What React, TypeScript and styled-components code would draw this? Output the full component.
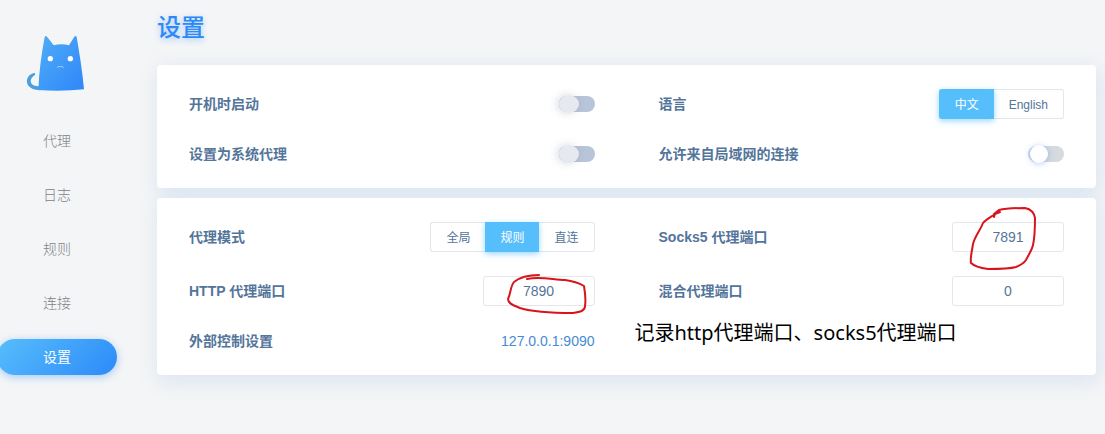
import React, { useState } from "react";
import styled, { createGlobalStyle, css } from "styled-components";

const GlobalStyle = createGlobalStyle`
  * { box-sizing: border-box; }
  body {
    margin: 0;
    background: #f4f5f6;
    font-family: "Liberation Sans", "Noto Sans CJK SC", sans-serif;
    font-size: 14px;
    color: #54759a;
  }
  button, input { font-family: inherit; }
`;

const Page = styled.div`
  display: flex;
  min-height: 100vh;
  overflow: hidden;
`;

const Sidebar = styled.aside`
  flex: none;
  width: 120px;
  margin-left: -3px;
  padding-top: 34px;
  display: flex;
  flex-direction: column;
  align-items: center;
`;

const Nav = styled.nav`
  width: 100%;
  margin-top: 32px;
  display: flex;
  flex-direction: column;
  gap: 18px;
`;

const NavLink = styled.a<{ $active?: boolean }>`
  height: 36px;
  border-radius: 18px;
  line-height: 36px;
  text-align: center;
  text-decoration: none;
  font-weight: 300;
  color: #808388;
  ${(p) =>
    p.$active &&
    css`
      color: #fff;
      font-weight: 400;
      background: linear-gradient(135deg, #57befc, #2c8af8);
      box-shadow: 0 2px 8px rgba(44, 138, 248, 0.4);
    `}
`;

const Main = styled.main`
  flex: 1;
  min-width: 0;
  padding: 10px 9px 40px 40px;
`;

const Title = styled.h1`
  margin: 0 0 19px;
  font-size: 24px;
  line-height: 36px;
  font-weight: 500;
  color: #2c8af8;
  text-shadow: 0 2px 6px rgba(44, 138, 248, 0.4);
`;

const Card = styled.section`
  display: grid;
  grid-template-columns: 1fr 1fr;
  row-gap: 24px;
  padding: 24px 0;
  margin-bottom: 10px;
  border-radius: 4px;
  background: #fff;
  box-shadow: 2px 5px 20px 2px rgba(50, 125, 220, 0.12);
`;

const Row = styled.div`
  position: relative;
  display: flex;
  align-items: center;
  justify-content: space-between;
  min-height: 21px;
  padding: 0 32px;
`;

const Label = styled.label`
  font-weight: 700;
  line-height: 20px;
`;

const Switch = styled.input`
  appearance: none;
  position: relative;
  width: 36px;
  height: 16px;
  margin: 0;
  border-radius: 8px;
  background: #d5dadf;
  cursor: pointer;

  &::before {
    content: "";
    position: absolute;
    top: -1px;
    left: 2px;
    width: 18px;
    height: 18px;
    border-radius: 50%;
    background: #fff;
    box-shadow: 0 1px 6px rgba(44, 110, 240, 0.35);
  }
  &:checked {
    background: #57befc;
  }
  &:checked::before {
    left: 18px;
  }
  &:disabled {
    background: #b8c5d8;
    cursor: default;
  }
  &:disabled::before {
    left: 0;
    width: 20px;
    background: #e6eaf0;
    box-shadow: -2px 0 8px rgba(84, 100, 130, 0.25);
  }
`;

const Segments = styled.div`
  display: flex;
`;

const Segment = styled.button<{ $active: boolean }>`
  height: 30px;
  padding: 1px 15px 0;
  border: 1px solid #e3e7ec;
  border-right-width: 0;
  background: #fff;
  color: #54759a;
  font-size: 12px;
  line-height: 28px;
  cursor: pointer;
  &:first-child { border-radius: 3px 0 0 3px; }
  &:last-child { border-right-width: 1px; border-radius: 0 3px 3px 0; }
  ${(p) =>
    p.$active &&
    css`
      z-index: 1;
      border-color: #57befc;
      background: #57befc;
      color: #fff;
      box-shadow: 0 2px 6px rgba(87, 190, 252, 0.6);
      & + & { border-left-width: 0; }
    `}
`;

const Field = styled.div`
  position: relative;
  height: 30px;
`;

const PortInput = styled.input`
  display: block;
  width: 112px;
  height: 30px;
  padding: 0 8px;
  border: 1px solid #e3e7ec;
  border-radius: 3px;
  background: #fff;
  color: #54759a;
  font-size: 14px;
  text-align: center;
`;

const Address = styled.a`
  color: #468bd6;
  text-decoration: none;
`;

const Scribble = styled.svg`
  position: absolute;
  left: 0;
  top: -24px;
  width: 112px;
  height: 80px;
  overflow: visible;
  pointer-events: none;
  fill: none;
  stroke: #d8141c;
  stroke-width: 2;
  stroke-linecap: round;
  stroke-linejoin: round;
`;

const Note = styled.p`
  position: absolute;
  left: 8px;
  bottom: 4px;
  margin: 0;
  font-family: "Noto Sans", "Noto Sans CJK SC", sans-serif;
  font-size: 20px;
  line-height: 28px;
  white-space: nowrap;
  color: #000;
`;

const Cat = () => (
  <svg width="59" height="57" viewBox="84 102 177 171" aria-label="Clash" overflow="visible">
    <defs>
      <linearGradient id="fur" x1="0" y1="0" x2="1" y2="1">
        <stop offset="0" stopColor="#4fadf5" />
        <stop offset="1" stopColor="#2f86fb" />
      </linearGradient>
    </defs>
    <path
      d="M105 219C74 221 66 270 122 271L120 258C92 262 82 239 105 225Z"
      fill="#4b9fdc"
    />
    <path
      d="M134 111Q137 105 141 110L161 136Q184 130 207 136L223 110Q227 105 230 111C238 158 247 212 252 268Q184 275 115 270C117 214 125 160 134 111Z"
      fill="url(#fur)"
    />
    <circle cx="151" cy="176" r="8" fill="#fff" />
    <circle cx="211" cy="176" r="8" fill="#fff" />
    <path d="M172 202Q177 197 181 200Q185 197 190 202" fill="none" stroke="#b9dcfb" strokeWidth="2.5" strokeLinecap="round" />
  </svg>
);

function Choice({ label, options, initial }: { label: string; options: string[]; initial: string }) {
  const [value, setValue] = useState(initial);
  return (
    <Segments role="group" aria-label={label}>
      {options.map((o) => (
        <Segment key={o} type="button" $active={o === value} aria-pressed={o === value} onClick={() => setValue(o)}>
          {o}
        </Segment>
      ))}
    </Segments>
  );
}

export default function App() {
  return (
    <Page>
      <GlobalStyle />
      <Sidebar>
        <Cat />
        <Nav>
          {["代理", "日志", "规则", "连接", "设置"].map((name) => (
            <NavLink key={name} href="#" $active={name === "设置"}>
              {name}
            </NavLink>
          ))}
        </Nav>
      </Sidebar>
      <Main>
        <Title>设置</Title>
        <Card>
          <Row>
            <Label htmlFor="startup">开机时启动</Label>
            <Switch id="startup" type="checkbox" disabled />
          </Row>
          <Row>
            <Label as="span">语言</Label>
            <Choice label="语言" options={["中文", "English"]} initial="中文" />
          </Row>
          <Row>
            <Label htmlFor="system">设置为系统代理</Label>
            <Switch id="system" type="checkbox" disabled />
          </Row>
          <Row>
            <Label htmlFor="lan">允许来自局域网的连接</Label>
            <Switch id="lan" type="checkbox" />
          </Row>
        </Card>
        <Card>
          <Row>
            <Label as="span">代理模式</Label>
            <Choice label="代理模式" options={["全局", "规则", "直连"]} initial="规则" />
          </Row>
          <Row>
            <Label htmlFor="socks">Socks5 代理端口</Label>
            <Field>
              <PortInput id="socks" defaultValue="7891" />
              <Scribble viewBox="0 0 112 80">
                <path d="M48 14L43 16L42 19M43 16C39 19 34 21 31 25C28 33 23 38 21 46C20 53 18 60 19 65C23 69 29 70 36 71C46 71 57 71 64 69C69 67 72 65 74 62C77 56 80 52 81 47C83 38 83 28 83 20C82 14 78 11 73 10C65 10 54 10 47 12L42 16" />
              </Scribble>
            </Field>
          </Row>
          <Row>
            <Label htmlFor="http">HTTP 代理端口</Label>
            <Field>
              <PortInput id="http" defaultValue="7890" />
              <Scribble viewBox="0 0 112 80">
                <path d="M56 23C45 23 37 25 31 30C27 35 28 41 25 47C25 52 32 54 37 56C50 60 69 61 90 61C97 60 102 59 102 54C103 48 102 40 101 34C96 31 90 29 82 28C71 28 58 24 44 27" />
              </Scribble>
            </Field>
          </Row>
          <Row>
            <Label htmlFor="mixed">混合代理端口</Label>
            <Field>
              <PortInput id="mixed" defaultValue="0" />
            </Field>
          </Row>
          <Row>
            <Label as="span">外部控制设置</Label>
            <Address href="#">127.0.0.1:9090</Address>
          </Row>
          <Row>
            <Note>记录http代理端口、socks5代理端口</Note>
          </Row>
        </Card>
      </Main>
    </Page>
  );
}
